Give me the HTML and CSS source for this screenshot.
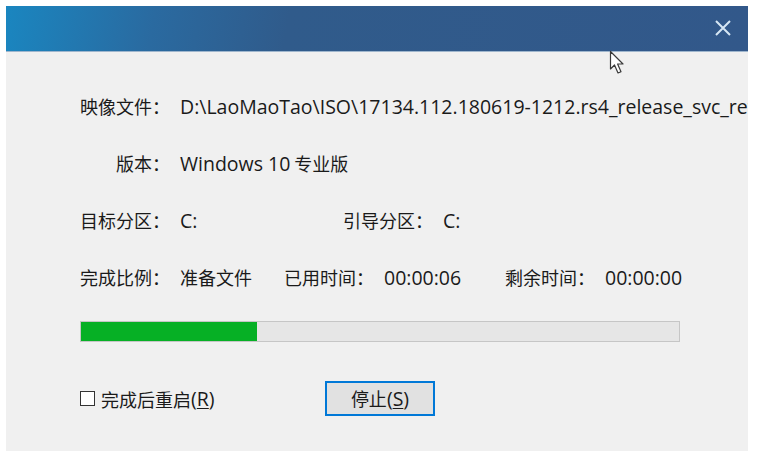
FILE: index.html
```html
<!DOCTYPE html>
<html lang="zh-CN">
<head>
<meta charset="utf-8">
<title>LaoMaoTao</title>
<link rel="stylesheet" href="styles.css">
</head>
<body>
<div class="window">
  <div class="titlebar">
    <svg class="close" width="18" height="16" viewBox="0 0 18 16"><path d="M2 1 L16 15 M16 1 L2 15" stroke="#d6e6f4" stroke-width="2" fill="none"/></svg>
  </div>
  <div class="content">
    <div class="row">
      <span class="lbl">映像文件：</span><span class="val lat path">D:\LaoMaoTao\ISO\17134.112.180619-1212.rs4_release_svc_refresh_CLIENTCONSUMER_RET_x64FRE_zh-cn.esd</span>
    </div>
    <div class="row">
      <span class="lbl">版本：</span><span class="val"><span class="lat">Windows 10</span> 专业版</span>
    </div>
    <div class="row">
      <span class="lbl">目标分区：</span><span class="val lat w-c">C:</span>
      <span class="lbl">引导分区：</span><span class="val lat">C:</span>
    </div>
    <div class="row">
      <span class="lbl">完成比例：</span><span class="val w-prep">准备文件</span>
      <span class="lbl">已用时间：</span><span class="val lat w-time">00:00:06</span>
      <span class="lbl">剩余时间：</span><span class="val lat">00:00:00</span>
    </div>
    <div class="progress"><div class="fill" style="width:29.5%"></div></div>
    <div class="actions">
      <label class="check"><span class="box"></span>完成后重启<span class="lat">(<u>R</u>)</span></label>
      <button class="btn">停止<span class="lat">(<u>S</u>)</span></button>
    </div>
  </div>
  <svg class="cursor" width="18" height="26" viewBox="0 0 18 26"><path d="M1.5 1.5 L1.5 19 L5.5 15 L9 23 L12 21.7 L8.6 14 L14 14 Z" fill="#ffffff" stroke="#3a3a3a" stroke-width="1.2" stroke-linejoin="round"/></svg>
</div>
</body>
</html>
```
FILE: styles.css
```css
html, body {
  margin: 0;
  padding: 0;
  background: #ffffff;
}
body {
  font-family: "Open Sans", "Noto Sans CJK SC", sans-serif;
  color: #1a1a1a;
}
.window {
  position: relative;
  margin: 6px 0 0 6px;
  width: 742px;
  height: 445px;
  background: #f0f0f0;
  overflow: hidden;
}
.titlebar {
  height: 45px;
  border-bottom: 1px solid #9fb6cd;
  background: linear-gradient(100deg, #1a86c0 0%, #2a6aa0 20%, #305b8b 38%, #32588a 100%);
  display: flex;
  justify-content: flex-end;
  align-items: center;
  padding-right: 16px;
}
.close {
  display: block;
  margin-top: -2px;
}
.content {
  padding: 26px 0 0 74px;
  font-family: "Noto Sans CJK SC", sans-serif;
  font-size: 18px;
}
.lat {
  font-family: "Open Sans", "Noto Sans CJK SC", sans-serif;
  font-size: 19.5px;
}
.path { letter-spacing: 0; }
.row {
  display: flex;
  height: 57px;
  line-height: 57px;
  white-space: nowrap;
}
.lbl {
  width: 90px;
  text-align: right;
  margin-right: 10px;
  flex: none;
}
.val { flex: none; }
.w-c { width: 163px; }
.w-prep { width: 104px; }
.w-time { width: 121px; }
.progress {
  margin-top: 15px;
  width: 598px;
  height: 19px;
  border: 1px solid #c6c6c6;
  background: #e6e6e6;
}
.fill {
  height: 100%;
  background: #06b025;
}
.actions {
  display: flex;
  align-items: center;
  margin-top: 39px;
  height: 35px;
}
.check {
  display: flex;
  align-items: center;
  width: 245px;
  line-height: 1;
}
.box {
  width: 13px;
  height: 13px;
  border: 1px solid #333333;
  background: #ffffff;
  margin-right: 6px;
}
.btn {
  width: 110px;
  height: 35px;
  border: 2px solid #0078d7;
  background: #e1e1e1;
  font-family: "Noto Sans CJK SC", sans-serif;
  font-size: 18px;
  line-height: 1;
  color: #1a1a1a;
  padding: 0;
}
u { text-underline-offset: 2px; }
.cursor {
  position: absolute;
  left: 603px;
  top: 44px;
}
```
